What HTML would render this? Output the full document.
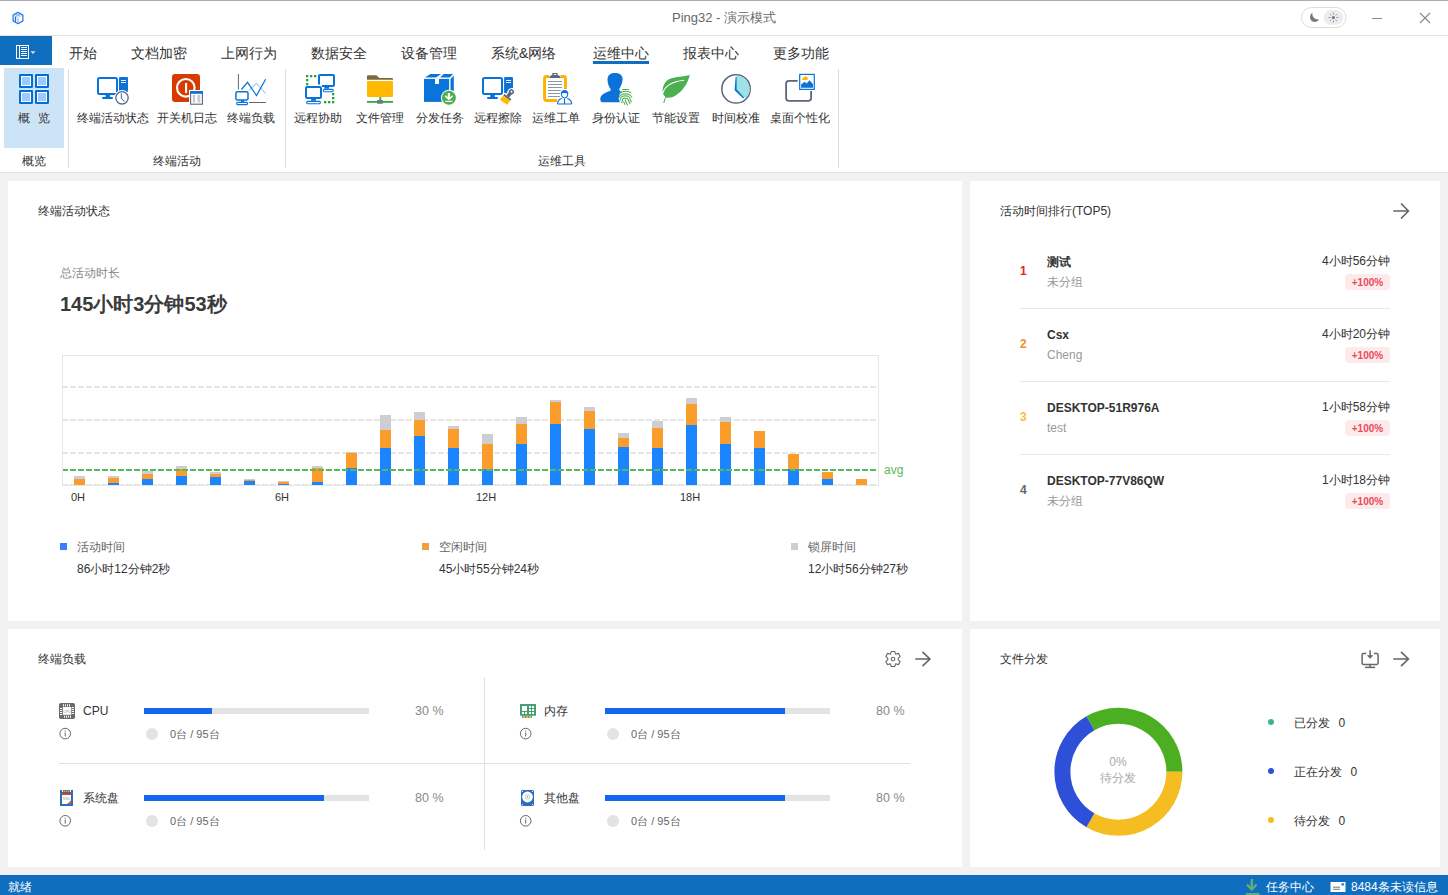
<!DOCTYPE html>
<html><head><meta charset="utf-8">
<style>
html,body{margin:0;padding:0;}
body{width:1448px;height:895px;overflow:hidden;position:relative;background:#f2f2f2;font-family:"Liberation Sans",sans-serif;color:#333;}
.a{position:absolute;white-space:nowrap;}
#title{left:0;top:0;width:1448px;height:35px;background:#fff;border-top:1px solid #adadad;box-sizing:border-box;}
#tline{left:0;top:35px;width:1448px;height:1px;background:#e3e3e3;}
#menu{left:0;top:36px;width:1448px;height:137px;background:#fff;}
#rline{left:0;top:172px;width:1448px;height:1px;background:#e0e0e0;}
.card{position:absolute;background:#fff;}
.tab{position:absolute;top:43px;font-size:14px;line-height:20px;color:#333;}
.rl{position:absolute;top:110px;font-size:12px;line-height:16px;color:#333;}
.gl{position:absolute;top:153px;font-size:12px;line-height:16px;color:#333;}
.sep{position:absolute;top:69px;width:1px;height:99px;background:#dcdcdc;}
.ct{font-size:12px;line-height:16px;color:#333;}
.badge{width:45px;height:16px;border-radius:4px;background:#fdeaea;color:#ea4b5b;font-size:10px;line-height:17px;text-align:center;font-weight:bold;}
</style></head><body>
<div class="a" id="title"></div>
<div class="a" id="tline"></div>
<div class="a" id="menu"></div>
<div class="a" id="rline"></div>
<!-- title -->
<div class="a" style="left:0;top:9px;width:1448px;text-align:center;font-size:13px;line-height:17px;color:#666;">Ping32 - 演示模式</div>
<!-- file btn -->
<div class="a" style="left:0;top:36px;width:52px;height:29px;background:#106ebe;"></div>
<!-- overview highlight -->
<div class="a" style="left:4px;top:68px;width:60px;height:80px;background:#cde4f7;"></div>
<div class="sep" style="left:68px"></div>
<div class="sep" style="left:285px"></div>
<div class="sep" style="left:838px"></div>
<!-- tabs -->
<div class="tab" style="left:69px">开始</div>
<div class="tab" style="left:131px">文档加密</div>
<div class="tab" style="left:221px">上网行为</div>
<div class="tab" style="left:311px">数据安全</div>
<div class="tab" style="left:401px">设备管理</div>
<div class="tab" style="left:491px">系统&amp;网络</div>
<div class="tab" style="left:593px">运维中心</div>
<div class="a" style="left:593px;top:61px;width:56px;height:3px;background:#106ebe;"></div>
<div class="tab" style="left:683px">报表中心</div>
<div class="tab" style="left:773px">更多功能</div>
<!-- ribbon labels -->
<div class="rl" style="left:18px;letter-spacing:8px">概览</div>
<div class="rl" style="left:77px">终端活动状态</div>
<div class="rl" style="left:157px">开关机日志</div>
<div class="rl" style="left:227px">终端负载</div>
<div class="rl" style="left:294px">远程协助</div>
<div class="rl" style="left:356px">文件管理</div>
<div class="rl" style="left:416px">分发任务</div>
<div class="rl" style="left:474px">远程擦除</div>
<div class="rl" style="left:532px">运维工单</div>
<div class="rl" style="left:592px">身份认证</div>
<div class="rl" style="left:652px">节能设置</div>
<div class="rl" style="left:712px">时间校准</div>
<div class="rl" style="left:770px">桌面个性化</div>
<div class="gl" style="left:22px">概览</div>
<div class="gl" style="left:153px">终端活动</div>
<div class="gl" style="left:538px">运维工具</div>
<!-- cards -->
<div class="card" style="left:8px;top:181px;width:954px;height:440px"></div>
<div class="card" style="left:970px;top:181px;width:470px;height:440px"></div>
<div class="card" style="left:8px;top:629px;width:954px;height:238px"></div>
<div class="card" style="left:970px;top:629px;width:470px;height:238px"></div>
<!-- status bar -->
<div class="a" style="left:0;top:875px;width:1448px;height:20px;background:#106ebe;"></div>
<div class="a" style="left:8px;top:879px;font-size:12px;line-height:16px;color:#fff;">就绪</div>
<div class="a" style="left:1266px;top:879px;font-size:12px;line-height:16px;color:#fff;">任务中心</div>
<div class="a" style="left:1351px;top:879px;font-size:12px;line-height:16px;color:#fff;">8484条未读信息</div>
<!-- card1 -->
<div class="a ct" style="left:38px;top:203px;">终端活动状态</div>
<div class="a" style="left:60px;top:265px;font-size:12px;line-height:16px;color:#888;">总活动时长</div>
<div class="a" style="left:60px;top:291px;font-size:20px;line-height:26px;font-weight:bold;color:#3a3a3a;">145小时3分钟53秒</div>
<div class="a" style="left:67px;top:490px;width:22px;text-align:center;font-size:11px;line-height:14px;color:#333;">0H</div>
<div class="a" style="left:271px;top:490px;width:22px;text-align:center;font-size:11px;line-height:14px;color:#333;">6H</div>
<div class="a" style="left:473px;top:490px;width:26px;text-align:center;font-size:11px;line-height:14px;color:#333;">12H</div>
<div class="a" style="left:677px;top:490px;width:26px;text-align:center;font-size:11px;line-height:14px;color:#333;">18H</div>
<div class="a" style="left:884px;top:462px;font-size:12px;line-height:16px;color:#5cb85c;">avg</div>
<div class="a" style="left:60px;top:543px;width:7px;height:7px;background:#3d7eff;"></div>
<div class="a" style="left:422px;top:543px;width:7px;height:7px;background:#f0a040;"></div>
<div class="a" style="left:791px;top:543px;width:7px;height:7px;background:#cdcdd2;"></div>
<div class="a" style="left:77px;top:539px;font-size:12px;line-height:16px;color:#666;">活动时间</div>
<div class="a" style="left:439px;top:539px;font-size:12px;line-height:16px;color:#666;">空闲时间</div>
<div class="a" style="left:808px;top:539px;font-size:12px;line-height:16px;color:#666;">锁屏时间</div>
<div class="a" style="left:77px;top:561px;font-size:12px;line-height:16px;color:#333;">86小时12分钟2秒</div>
<div class="a" style="left:439px;top:561px;font-size:12px;line-height:16px;color:#333;">45小时55分钟24秒</div>
<div class="a" style="left:808px;top:561px;font-size:12px;line-height:16px;color:#333;">12小时56分钟27秒</div>
<!-- card2 -->
<div class="a ct" style="left:1000px;top:203px;">活动时间排行(TOP5)</div>
<div class="a" style="left:1020px;top:263px;font-size:12px;line-height:16px;font-weight:bold;color:#e8251f;">1</div>
<div class="a" style="left:1020px;top:336px;font-size:12px;line-height:16px;font-weight:bold;color:#f0902a;">2</div>
<div class="a" style="left:1020px;top:409px;font-size:12px;line-height:16px;font-weight:bold;color:#f5c033;">3</div>
<div class="a" style="left:1020px;top:482px;font-size:12px;line-height:16px;font-weight:bold;color:#666;">4</div>
<div class="a" style="left:1047px;top:254px;font-size:12px;line-height:16px;font-weight:bold;color:#333;">测试</div>
<div class="a" style="left:1047px;top:327px;font-size:12px;line-height:16px;font-weight:bold;color:#333;">Csx</div>
<div class="a" style="left:1047px;top:400px;font-size:12px;line-height:16px;font-weight:bold;color:#333;">DESKTOP-51R976A</div>
<div class="a" style="left:1047px;top:473px;font-size:12px;line-height:16px;font-weight:bold;color:#333;">DESKTOP-77V86QW</div>
<div class="a" style="left:1047px;top:274px;font-size:12px;line-height:16px;color:#999;">未分组</div>
<div class="a" style="left:1047px;top:347px;font-size:12px;line-height:16px;color:#999;">Cheng</div>
<div class="a" style="left:1047px;top:420px;font-size:12px;line-height:16px;color:#999;">test</div>
<div class="a" style="left:1047px;top:493px;font-size:12px;line-height:16px;color:#999;">未分组</div>
<div class="a" style="right:58px;top:253px;font-size:12px;line-height:16px;color:#333;">4小时56分钟</div>
<div class="a" style="right:58px;top:326px;font-size:12px;line-height:16px;color:#333;">4小时20分钟</div>
<div class="a" style="right:58px;top:399px;font-size:12px;line-height:16px;color:#333;">1小时58分钟</div>
<div class="a" style="right:58px;top:472px;font-size:12px;line-height:16px;color:#333;">1小时18分钟</div>
<div class="a badge" style="left:1345px;top:274px;">+100%</div>
<div class="a badge" style="left:1345px;top:347px;">+100%</div>
<div class="a badge" style="left:1345px;top:420px;">+100%</div>
<div class="a badge" style="left:1345px;top:493px;">+100%</div>
<div class="a" style="left:1020px;top:308px;width:370px;height:1px;background:#e8e8e8;"></div>
<div class="a" style="left:1020px;top:381px;width:370px;height:1px;background:#e8e8e8;"></div>
<div class="a" style="left:1020px;top:454px;width:370px;height:1px;background:#e8e8e8;"></div>
<!-- card3 -->
<div class="a ct" style="left:38px;top:651px;">终端负载</div>
<div class="a" style="left:484px;top:677px;width:1px;height:173px;background:#e0e0e0;"></div>
<div class="a" style="left:59px;top:763px;width:851px;height:1px;background:#e0e0e0;"></div>
<div class="a" style="left:83px;top:703px;font-size:12px;line-height:16px;color:#333;">CPU</div>
<div class="a" style="left:144px;top:708px;width:225px;height:6px;background:#e3e3e3;"><div style="width:68px;height:6px;background:#1466f0;"></div></div>
<div class="a" style="left:415px;top:703px;font-size:12.5px;line-height:16px;color:#888;">30 %</div>
<div class="a" style="left:146px;top:728px;width:12px;height:12px;border-radius:6px;background:#e3e3e3;"></div>
<div class="a" style="left:170px;top:727px;font-size:11px;line-height:14px;color:#666;">0台 / 95台</div>
<div class="a" style="left:544px;top:703px;font-size:12px;line-height:16px;color:#333;">内存</div>
<div class="a" style="left:605px;top:708px;width:225px;height:6px;background:#e3e3e3;"><div style="width:180px;height:6px;background:#1466f0;"></div></div>
<div class="a" style="left:876px;top:703px;font-size:12.5px;line-height:16px;color:#888;">80 %</div>
<div class="a" style="left:607px;top:728px;width:12px;height:12px;border-radius:6px;background:#e3e3e3;"></div>
<div class="a" style="left:631px;top:727px;font-size:11px;line-height:14px;color:#666;">0台 / 95台</div>
<div class="a" style="left:83px;top:790px;font-size:12px;line-height:16px;color:#333;">系统盘</div>
<div class="a" style="left:144px;top:795px;width:225px;height:6px;background:#e3e3e3;"><div style="width:180px;height:6px;background:#1466f0;"></div></div>
<div class="a" style="left:415px;top:790px;font-size:12.5px;line-height:16px;color:#888;">80 %</div>
<div class="a" style="left:146px;top:815px;width:12px;height:12px;border-radius:6px;background:#e3e3e3;"></div>
<div class="a" style="left:170px;top:814px;font-size:11px;line-height:14px;color:#666;">0台 / 95台</div>
<div class="a" style="left:544px;top:790px;font-size:12px;line-height:16px;color:#333;">其他盘</div>
<div class="a" style="left:605px;top:795px;width:225px;height:6px;background:#e3e3e3;"><div style="width:180px;height:6px;background:#1466f0;"></div></div>
<div class="a" style="left:876px;top:790px;font-size:12.5px;line-height:16px;color:#888;">80 %</div>
<div class="a" style="left:607px;top:815px;width:12px;height:12px;border-radius:6px;background:#e3e3e3;"></div>
<div class="a" style="left:631px;top:814px;font-size:11px;line-height:14px;color:#666;">0台 / 95台</div>
<!-- card4 -->
<div class="a ct" style="left:1000px;top:651px;">文件分发</div>
<div class="a" style="left:1088px;top:754px;width:60px;text-align:center;font-size:12px;line-height:16px;color:#aaa;">0%<br>待分发</div>
<div class="a" style="left:1268px;top:718.8px;width:6.4px;height:6.4px;border-radius:4px;background:#3cb68c;"></div>
<div class="a" style="left:1268px;top:767.7px;width:6.4px;height:6.4px;border-radius:4px;background:#2e4fd8;"></div>
<div class="a" style="left:1268px;top:817px;width:6.4px;height:6.4px;border-radius:4px;background:#f5bd22;"></div>
<div class="a" style="left:1294px;top:715px;font-size:12px;line-height:16px;color:#333;">已分发<span style="margin-left:8.5px">0</span></div>
<div class="a" style="left:1294px;top:764px;font-size:12px;line-height:16px;color:#333;">正在分发<span style="margin-left:8.5px">0</span></div>
<div class="a" style="left:1294px;top:813px;font-size:12px;line-height:16px;color:#333;">待分发<span style="margin-left:8.5px">0</span></div>
<svg class="a" style="left:0;top:0" width="1448" height="895" viewBox="0 0 1448 895">
<!-- chart frame -->
<rect x="62.5" y="355.5" width="816" height="130" fill="none" stroke="#e6e6e6" stroke-width="1"/>
<g stroke="#e6e6e6" stroke-width="2" stroke-dasharray="6 2">
<line x1="62" y1="387" x2="878" y2="387"/>
<line x1="62" y1="420" x2="878" y2="420"/>
<line x1="62" y1="453" x2="878" y2="453"/>
<line x1="62" y1="485" x2="878" y2="485"/>
</g>
<rect x="74" y="479" width="11" height="6" fill="#fa9d2b"/>
<rect x="74" y="476" width="11" height="3" fill="#cdcdd2"/>
<rect x="108" y="483" width="11" height="2" fill="#1a85ff"/>
<rect x="108" y="478" width="11" height="5" fill="#fa9d2b"/>
<rect x="108" y="476" width="11" height="2" fill="#cdcdd2"/>
<rect x="142" y="479" width="11" height="6" fill="#1a85ff"/>
<rect x="142" y="474" width="11" height="5" fill="#fa9d2b"/>
<rect x="142" y="471" width="11" height="3" fill="#cdcdd2"/>
<rect x="176" y="476" width="11" height="9" fill="#1a85ff"/>
<rect x="176" y="469" width="11" height="7" fill="#fa9d2b"/>
<rect x="176" y="466" width="11" height="3" fill="#cdcdd2"/>
<rect x="210" y="477" width="11" height="8" fill="#1a85ff"/>
<rect x="210" y="474" width="11" height="3" fill="#fa9d2b"/>
<rect x="210" y="472" width="11" height="2" fill="#cdcdd2"/>
<rect x="244" y="481" width="11" height="4" fill="#1a85ff"/>
<rect x="244" y="480" width="11" height="1" fill="#fa9d2b"/>
<rect x="244" y="479" width="11" height="1" fill="#cdcdd2"/>
<rect x="278" y="484" width="11" height="1" fill="#1a85ff"/>
<rect x="278" y="482" width="11" height="2" fill="#fa9d2b"/>
<rect x="278" y="481" width="11" height="1" fill="#cdcdd2"/>
<rect x="312" y="482" width="11" height="3" fill="#1a85ff"/>
<rect x="312" y="468" width="11" height="14" fill="#fa9d2b"/>
<rect x="312" y="466" width="11" height="2" fill="#cdcdd2"/>
<rect x="346" y="468" width="11" height="17" fill="#1a85ff"/>
<rect x="346" y="453" width="11" height="15" fill="#fa9d2b"/>
<rect x="346" y="452" width="11" height="1" fill="#cdcdd2"/>
<rect x="380" y="448" width="11" height="37" fill="#1a85ff"/>
<rect x="380" y="430" width="11" height="18" fill="#fa9d2b"/>
<rect x="380" y="415" width="11" height="15" fill="#cdcdd2"/>
<rect x="414" y="436" width="11" height="49" fill="#1a85ff"/>
<rect x="414" y="420" width="11" height="16" fill="#fa9d2b"/>
<rect x="414" y="412" width="11" height="8" fill="#cdcdd2"/>
<rect x="448" y="448" width="11" height="37" fill="#1a85ff"/>
<rect x="448" y="429" width="11" height="19" fill="#fa9d2b"/>
<rect x="448" y="426" width="11" height="3" fill="#cdcdd2"/>
<rect x="482" y="469" width="11" height="16" fill="#1a85ff"/>
<rect x="482" y="444" width="11" height="25" fill="#fa9d2b"/>
<rect x="482" y="434" width="11" height="10" fill="#cdcdd2"/>
<rect x="516" y="444" width="11" height="41" fill="#1a85ff"/>
<rect x="516" y="424" width="11" height="20" fill="#fa9d2b"/>
<rect x="516" y="417" width="11" height="7" fill="#cdcdd2"/>
<rect x="550" y="424" width="11" height="61" fill="#1a85ff"/>
<rect x="550" y="402" width="11" height="22" fill="#fa9d2b"/>
<rect x="550" y="400" width="11" height="2" fill="#cdcdd2"/>
<rect x="584" y="429" width="11" height="56" fill="#1a85ff"/>
<rect x="584" y="411" width="11" height="18" fill="#fa9d2b"/>
<rect x="584" y="407" width="11" height="4" fill="#cdcdd2"/>
<rect x="618" y="447" width="11" height="38" fill="#1a85ff"/>
<rect x="618" y="438" width="11" height="9" fill="#fa9d2b"/>
<rect x="618" y="433" width="11" height="5" fill="#cdcdd2"/>
<rect x="652" y="448" width="11" height="37" fill="#1a85ff"/>
<rect x="652" y="428" width="11" height="20" fill="#fa9d2b"/>
<rect x="652" y="421" width="11" height="7" fill="#cdcdd2"/>
<rect x="686" y="425" width="11" height="60" fill="#1a85ff"/>
<rect x="686" y="404" width="11" height="21" fill="#fa9d2b"/>
<rect x="686" y="398" width="11" height="6" fill="#cdcdd2"/>
<rect x="720" y="444" width="11" height="41" fill="#1a85ff"/>
<rect x="720" y="422" width="11" height="22" fill="#fa9d2b"/>
<rect x="720" y="417" width="11" height="5" fill="#cdcdd2"/>
<rect x="754" y="448" width="11" height="37" fill="#1a85ff"/>
<rect x="754" y="431" width="11" height="17" fill="#fa9d2b"/>
<rect x="788" y="469" width="11" height="16" fill="#1a85ff"/>
<rect x="788" y="454" width="11" height="15" fill="#fa9d2b"/>
<rect x="822" y="479" width="11" height="6" fill="#1a85ff"/>
<rect x="822" y="472" width="11" height="7" fill="#fa9d2b"/>
<rect x="856" y="479" width="11" height="6" fill="#fa9d2b"/>
<line x1="63" y1="470" x2="878" y2="470" stroke="#56b95a" stroke-width="2" stroke-dasharray="6 2" stroke-dashoffset="1"/>
<!-- donut -->
<g fill="none" stroke-width="16">
<path d="M1090.4 723.2 A56 56 0 0 1 1174.4 771.7" stroke="#4caf22"/>
<path d="M1174.4 771.7 A56 56 0 0 1 1090.4 820.2" stroke="#f5bd22"/>
<path d="M1090.4 820.2 A56 56 0 0 1 1090.4 723.2" stroke="#2e4fd8"/>
</g>
</svg>
<svg class="a" style="left:0;top:0" width="1448" height="895" viewBox="0 0 1448 895">
<!-- logo -->
<path d="M13.1 15.1 L18 12.3 L22.9 15.1 L18 17.9 Z" fill="#cfe5fc"/>
<path d="M15.5 13.7 L20.4 16.5 M15.6 16.5 L20.5 13.7" stroke="#7db6f2" stroke-width="0.9" fill="none"/>
<path d="M15.5 16.6 V21.8" stroke="#1f6fd8" stroke-width="1.3"/>
<path d="M18 17.9 V23.6" stroke="#74b0f0" stroke-width="1.1"/>
<path d="M18 12.3 L22.9 15.1 V20.9 L18 23.7 L13.1 20.9 V15.1 Z" fill="none" stroke="#2a7de1" stroke-width="1.3" stroke-linejoin="round"/>
<!-- file menu icon -->
<g fill="none" stroke="#fff" stroke-width="1">
<rect x="16.5" y="45.5" width="12" height="13"/>
<line x1="19.5" y1="46" x2="19.5" y2="58"/>
<path d="M21 47.5H27M21 49.5H27M21 51.5H27M21 53.5H27M21 55.5H27"/>
</g>
<path d="M30.5 51.2 L35.5 51.2 L33 54 Z" fill="#cfe3f6"/>
<!-- overview grid -->
<g>
<rect x="19" y="74" width="14" height="14" rx="1.2" fill="#006fd6"/><rect x="21" y="76" width="10" height="10" fill="#fff"/><rect x="22" y="77" width="8" height="8" fill="#9ccbff"/>
<rect x="35" y="74" width="14" height="14" rx="1.2" fill="#006fd6"/><rect x="37" y="76" width="10" height="10" fill="#fff"/><rect x="38" y="77" width="8" height="8" fill="#9ccbff"/>
<rect x="19" y="90" width="14" height="14" rx="1.2" fill="#006fd6"/><rect x="21" y="92" width="10" height="10" fill="#fff"/><rect x="22" y="93" width="8" height="8" fill="#9ccbff"/>
<rect x="35" y="90" width="14" height="14" rx="1.2" fill="#006fd6"/><rect x="37" y="92" width="10" height="10" fill="#fff"/><rect x="38" y="93" width="8" height="8" fill="#9ccbff"/>
</g>
<!-- terminal activity status -->
<g>
<rect x="98" y="78" width="19" height="16" rx="1.5" fill="none" stroke="#0a72d8" stroke-width="2"/>
<rect x="105.5" y="94.5" width="4.5" height="3" fill="#0a72d8"/>
<rect x="102" y="97" width="11" height="2" rx="1" fill="#0a72d8"/>
<rect x="119" y="77" width="9" height="15" rx="1" fill="#0a72d8"/>
<path d="M121 80.5H126M121 82.5H126" stroke="#fff" stroke-width="0.9"/>
<circle cx="122" cy="97.8" r="7.8" fill="#fff"/>
<circle cx="122" cy="97.8" r="6.2" fill="#fff" stroke="#5c667a" stroke-width="1.3"/>
<path d="M121.3 93.3 L121.3 98.6 L124.6 101.3" fill="none" stroke="#0a72d8" stroke-width="1"/>
</g>
<!-- power log -->
<g>
<rect x="172" y="74" width="28" height="28" rx="3" fill="#d83b01"/>
<circle cx="185.8" cy="87.8" r="8.8" fill="none" stroke="#fff" stroke-width="2.1"/>
<rect x="185" y="83" width="2.1" height="10" fill="#fff"/>
<rect x="189" y="90" width="15" height="15.5" fill="#fff"/>
<rect x="190.6" y="91.6" width="11.8" height="12.6" fill="#fff" stroke="#5c667a" stroke-width="1.1"/>
<rect x="190" y="91" width="13" height="2.8" fill="#0a72d8"/>
<rect x="192.8" y="95" width="2.4" height="7.5" fill="#c3c7d3"/>
<rect x="197.3" y="95" width="3" height="7.5" fill="#c9ccd6"/>
</g>
<!-- terminal load -->
<g fill="none">
<line x1="238.4" y1="74" x2="238.4" y2="89.5" stroke="#5c667a" stroke-width="1"/>
<line x1="249" y1="102.5" x2="266" y2="102.5" stroke="#5c667a" stroke-width="1"/>
<polyline points="249,90.3 256.5,83.5 265.8,93.7" stroke="#9fcbf2" stroke-width="1.1"/>
<polyline points="241.4,89.5 247.5,82.3 256.5,95.5 265.6,79.2" stroke="#0a72d8" stroke-width="1.2"/>
<rect x="235.9" y="91.8" width="12.1" height="8.3" rx="1.5" stroke="#0a72d8" stroke-width="1.5"/>
<rect x="241" y="100.5" width="3" height="1.5" fill="#0a72d8"/>
<rect x="236.6" y="102.3" width="11" height="2.4" rx="1.2" stroke="#0a72d8" stroke-width="1.2"/>
</g>
<!-- remote assist -->
<g>
<g fill="#2aa03a">
<rect x="306" y="75" width="2.3" height="2.3"/><rect x="310" y="75" width="2.3" height="2.3"/><rect x="314" y="75" width="2.3" height="2.3"/>
<rect x="306" y="79" width="2.3" height="2.3"/><rect x="306" y="83" width="2.3" height="2.3"/>
<rect x="332" y="93" width="2.3" height="2.3"/><rect x="332" y="97" width="2.3" height="2.3"/><rect x="332" y="101" width="2.3" height="2.3"/>
<rect x="324" y="101" width="2.3" height="2.3"/><rect x="328" y="101" width="2.3" height="2.3"/>
</g>
<path d="M319 84.5 V76 Q319 75 320 75 H333 Q334 75 334 76 V85 Q334 86 333 86 H322" fill="none" stroke="#0a72d8" stroke-width="2"/>
<rect x="324.4" y="86.5" width="4.6" height="2.2" fill="#0a72d8"/>
<rect x="323.3" y="89.4" width="10" height="2.3" rx="1.1" fill="none" stroke="#0a72d8" stroke-width="1.1"/>
<rect x="306" y="87" width="15" height="11" rx="1.2" fill="#fff" stroke="#0a72d8" stroke-width="2"/>
<rect x="311.1" y="98.6" width="4.8" height="2.2" fill="#0a72d8"/>
<rect x="306.6" y="101.4" width="13.8" height="2.3" rx="1.1" fill="none" stroke="#0a72d8" stroke-width="1.1"/>
</g>
<!-- file manage -->
<g>
<path d="M367 79.8 V76.2 Q367 75.2 368 75.2 H376.4 L379.3 78 H392.3 Q393 78.3 393 79 V79.8 Z" fill="#7b6b3c"/>
<rect x="367" y="81" width="26" height="16" rx="1" fill="#ffb900"/>
<rect x="379.4" y="97" width="1.8" height="3.5" fill="#32aa3c"/>
<rect x="367" y="101" width="26" height="1.8" fill="#32aa3c"/>
<rect x="377.1" y="100.1" width="5.8" height="3.6" rx="0.5" fill="#6b7890"/>
</g>
<!-- distribute task -->
<g>
<rect x="424" y="78.9" width="25.1" height="23" fill="#0a74da"/>
<path d="M425.1 77.6 L430.4 74 H441.2 L435.9 77.6 Z M440.2 77.6 L443.6 74 H453.1 L449.7 77.6 Z" fill="#0a74da"/>
<path d="M450.5 78.9 L453.8 75.5 V90.8 L450.5 91.5 Z" fill="#0a74da"/>
<rect x="435" y="78.5" width="4" height="5.5" fill="#fff"/>
<circle cx="448.9" cy="97.8" r="8" fill="#fff"/>
<circle cx="448.9" cy="97.8" r="7" fill="#4caf50"/>
<path d="M447.8 93 H450 V97.2 L452 95.3 L453 96.5 L448.9 100.3 L444.8 96.5 L445.8 95.3 L447.8 97.2 Z" fill="#fff"/>
<rect x="445.4" y="100.8" width="7" height="1.2" fill="#fff"/>
</g>
<!-- remote erase -->
<g>
<rect x="483" y="78" width="19" height="16" rx="1.5" fill="none" stroke="#0a72d8" stroke-width="2"/>
<rect x="490.3" y="94.5" width="4.5" height="3" fill="#0a72d8"/>
<rect x="487" y="97" width="11" height="2" rx="1" fill="#0a72d8"/>
<path d="M505.1 77 H512 Q513 77 513 78 V88 L509 90 L506 94 L504.1 93 V78 Q504.1 77 505.1 77 Z" fill="#0a72d8"/>
<path d="M506 80.5H511M506 82.5H511" stroke="#fff" stroke-width="0.9"/>
<g transform="translate(511.4 91.8) rotate(37)">
<g fill="#fff" stroke="#fff" stroke-width="2.2" stroke-linejoin="round">
<circle cx="0" cy="0" r="2.6"/><rect x="-1.7" y="0" width="3.4" height="6"/><rect x="-4.4" y="6" width="8.8" height="7.4"/>
</g>
<circle cx="0" cy="0" r="2.6" fill="#5c667a"/>
<rect x="-1.7" y="0" width="3.4" height="6.2" fill="#5c667a"/>
<rect x="-4.4" y="6" width="8.8" height="1.8" fill="#5c667a"/>
<circle cx="0" cy="-0.2" r="1" fill="#fff"/>
<path d="M-4.4 7.8 H4.4 V13 Q0 13.8 -4.4 13 Z" fill="#ffb900"/>
</g>
<!-- work order -->
<g>
<path d="M549.5 76.45 H546.5 Q544.55 76.45 544.55 78.4 V98.6 Q544.55 100.55 546.5 100.55 H557" fill="none" stroke="#ffb300" stroke-width="2.9"/>
<path d="M560.5 76.45 H563.5 Q565.45 76.45 565.45 78.4 V89" fill="none" stroke="#ffb300" stroke-width="2.9"/>
<path d="M552.3 73 H557.5 V75.3 H559 L561 77.9 H549 L551 75.3 H552.3 Z" fill="#5c667a"/>
<rect x="553.8" y="73.9" width="2.4" height="1" fill="#fff"/>
<path d="M548 81.5H562M548 84.5H562M548 87.5H562M548 90.5H560.5M548 93.5H560M548 96.5H560" stroke="#8b95a8" stroke-width="1"/>
<path d="M557.5 104 Q557.5 99.5 561.8 98.5 M571.6 104 Q571.6 99.5 567.2 98.5 M557.5 104 H571.6 M564.5 98.6 V104" fill="#fff" stroke="#0a72d8" stroke-width="1.1"/>
<path d="M561.3 92.5 Q561.3 97.8 564.5 98 Q567.8 97.8 567.8 92.5" fill="#fff" stroke="#0a72d8" stroke-width="1.1"/>
<path d="M561 93.4 Q561 89.9 564.5 89.9 Q568.2 89.9 568.2 93.4 Q564.5 92.6 561 93.4 Z" fill="#0a72d8"/>
</g>
<!-- identity auth -->
<g>
<path d="M615 73 C620 73 622.8 75.7 622.6 79.5 C622.4 83.5 620.5 87 619.2 89 L619.8 91 C622 91.6 622.5 92 622.5 92 L620.8 102.3 H602.5 Q600.2 102 600.3 99 C600.5 95 604 93 610.5 90.8 L610.6 89 C609 87 607.5 83.5 607.5 79.5 C607.5 75.7 610 73 615 73 Z" fill="#0a72d8"/>
<circle cx="626.6" cy="98.2" r="7.9" fill="#fff"/>
<g fill="none" stroke="#4caf50" stroke-width="1.05" stroke-linecap="round">
<path d="M622.8 89.4 H628.6"/>
<path d="M619.8 92.9 Q625.3 89.8 630.8 92.6"/>
<path d="M619.2 97.2 Q620.6 93.9 625.3 93.7 Q630.2 93.9 631.8 97.2"/>
<path d="M620 100.2 Q620.8 95.9 625.3 95.8 Q629.8 95.9 630.4 100 L631.3 102"/>
<path d="M621.9 102.7 Q621.8 97.9 625.3 97.9 Q628.3 98 628.6 100.8 L629.9 103.8"/>
<path d="M625.3 99.8 Q625.8 102.6 627.6 104.8"/>
<path d="M623.7 101.8 L624.8 104.4"/>
</g>
</g>
<!-- energy leaf -->
<g>
<path d="M663.2 102.7 L665.3 96.8 C661.2 94 661.8 85.5 667 80.6 C672 76.5 681 77.3 689.8 75 C687.8 83 683.5 90.5 676 95.2 C672.3 97.6 668.6 98 665.9 97.4 L664.3 102.9 Z" fill="#4caf50"/>
<path d="M662.8 93.3 C664.6 86.8 670.5 81.6 684.2 80.2" fill="none" stroke="#fff" stroke-width="1.1"/>
</g>
<!-- time sync -->
<g>
<circle cx="736" cy="88.9" r="14.2" fill="#fff" stroke="#5c667a" stroke-width="1.5"/>
<path d="M736 75.4 A13.5 13.5 0 0 1 745.6 98.5 L735.6 89.6 Z" fill="#9ee2e6"/>
<path d="M735.6 77 L736.6 77.2 L736.6 89.2 L744.2 97.6 L743.2 98.4 L734.6 90.2 Z" fill="#0a72d8"/>
</g>
<!-- desktop personalize -->
<g>
<path d="M797.7 80.8 H789 Q786.1 80.8 786.1 83.7 V98 Q786.1 100.9 789 100.9 H808.2 Q811.1 100.9 811.1 98 V90.9" fill="none" stroke="#5c667a" stroke-width="1.8"/>
<rect x="799.7" y="74.4" width="14.6" height="15" fill="#fff" stroke="#0a72d8" stroke-width="1.2"/>
<path d="M802 79.5 Q802 77.6 803.8 77.5 Q804.5 76 806 76.4 Q808 76.7 807.9 78.5 Q808 79.9 807 79.9 H802.8 Q802 79.9 802 79.5 Z" fill="#ffb900"/>
<path d="M801.1 87.7 V84.5 L804.6 81.7 L806.6 83.6 L809.5 80.3 L813 84 V87.7 Z" fill="#0a72d8"/>
</g>
<!-- theme toggle -->
<rect x="1301.5" y="7.5" width="44.5" height="20" rx="10" fill="#fff" stroke="#dcdcdc" stroke-width="1"/>
<rect x="1323.7" y="10.1" width="19.5" height="14.7" rx="7.3" fill="#ececec"/>
<path d="M1312.6 12.8 C1309 14 1308.9 21.8 1314.5 22 C1316.6 22 1318.2 21 1319 19.3 C1314.8 20 1311.5 16.5 1312.6 12.8 Z" fill="#777"/>
<g stroke="#7a8194" stroke-width="0.8" stroke-linecap="round">
<line x1="1333.4" y1="13" x2="1333.4" y2="14.2"/><line x1="1333.4" y1="20.8" x2="1333.4" y2="22"/>
<line x1="1328.9" y1="17.5" x2="1330.1" y2="17.5"/><line x1="1336.7" y1="17.5" x2="1337.9" y2="17.5"/>
<line x1="1330.2" y1="14.3" x2="1331" y2="15.1"/><line x1="1335.8" y1="19.9" x2="1336.6" y2="20.7"/>
<line x1="1336.6" y1="14.3" x2="1335.8" y2="15.1"/><line x1="1331" y1="19.9" x2="1330.2" y2="20.7"/>
</g>
<circle cx="1333.4" cy="17.5" r="1.6" fill="#6b7590"/>
<!-- min / close -->
<line x1="1372" y1="18.5" x2="1382" y2="18.5" stroke="#888" stroke-width="1"/>
<path d="M1420 13 L1430 23 M1430 13 L1420 23" stroke="#888" stroke-width="1.1"/>
<!-- top5 arrow -->
<g fill="none" stroke="#666" stroke-width="1.7" stroke-linecap="round" stroke-linejoin="round">
<path d="M1394 211 H1408.5 M1401.5 204 L1408.5 211 L1401.5 218"/>
<path d="M916 659 H930 M923 652.3 L930 659 L923 665.7"/>
<path d="M1394 659 H1408.5 M1401.5 652.3 L1408.5 659 L1401.5 665.7"/>
</g>
<!-- gear -->
<path d="M891.3 651.5 H894.7 L895.6 654.2 L898.4 653.4 L900.1 656.3 L898.2 658.3 L898.2 659.7 L900.1 661.7 L898.4 664.6 L895.6 663.8 L894.7 666.5 H891.3 L890.4 663.8 L887.6 664.6 L885.9 661.7 L887.8 659.7 L887.8 658.3 L885.9 656.3 L887.6 653.4 L890.4 654.2 Z" fill="none" stroke="#666" stroke-width="1.1" stroke-linejoin="round"/>
<circle cx="893" cy="659" r="1.8" fill="none" stroke="#666" stroke-width="1.1"/>
<!-- download icon -->
<g fill="none" stroke="#666" stroke-width="1.5">
<path d="M1366.2 653.6 H1363.5 Q1362.1 653.6 1362.1 655 V663 Q1362.1 664.4 1363.5 664.4 H1376.7 Q1378.1 664.4 1378.1 663 V655 Q1378.1 653.6 1376.7 653.6 H1374"/>
<line x1="1370.1" y1="650.2" x2="1370.1" y2="656"/>
<line x1="1365.1" y1="667.4" x2="1375.1" y2="667.4"/>
<line x1="1370.1" y1="664.5" x2="1370.1" y2="667"/>
</g>
<path d="M1366.8 655.3 H1373.4 L1370.1 658.7 Z" fill="#666"/>
<!-- info icons -->
<g fill="none" stroke="#666" stroke-width="1">
<circle cx="65.2" cy="733.6" r="5.3"/><circle cx="525.7" cy="733.6" r="5.3"/>
<circle cx="65.2" cy="820.8" r="5.3"/><circle cx="525.7" cy="820.8" r="5.3"/>
</g>
<g fill="#666">
<rect x="64.7" y="730.6" width="1" height="1"/><rect x="64.7" y="732.4" width="1" height="4"/>
<rect x="525.2" y="730.6" width="1" height="1"/><rect x="525.2" y="732.4" width="1" height="4"/>
<rect x="64.7" y="817.8" width="1" height="1"/><rect x="64.7" y="819.6" width="1" height="4"/>
<rect x="525.2" y="817.8" width="1" height="1"/><rect x="525.2" y="819.6" width="1" height="4"/>
</g>
<!-- cpu icon -->
<g>
<rect x="59" y="703" width="16" height="16" rx="1.8" fill="#6b6b6b"/>
<rect x="62.8" y="707" width="8.5" height="7.8" fill="#fff"/>
<text x="67" y="712.6" font-size="3.5" text-anchor="middle" fill="#8a8fa0" font-family="Liberation Sans">CPU</text>
<g fill="#fff">
<rect x="63" y="704.3" width="1" height="2"/><rect x="65" y="704.3" width="1" height="2"/><rect x="67" y="704.3" width="1" height="2"/><rect x="69" y="704.3" width="1" height="2"/>
<rect x="64" y="715.7" width="1" height="2"/><rect x="66" y="715.7" width="1" height="2"/><rect x="68" y="715.7" width="1" height="2"/><rect x="70" y="715.7" width="1" height="2"/>
<rect x="60" y="708" width="2" height="1"/><rect x="60" y="710" width="2" height="1"/><rect x="60" y="712" width="2" height="1"/><rect x="60" y="714" width="2" height="1"/>
<rect x="72" y="707" width="2" height="1"/><rect x="72" y="709" width="2" height="1"/><rect x="72" y="711" width="2" height="1"/><rect x="72" y="713" width="2" height="1"/>
</g>
</g>
<!-- memory icon -->
<g>
<rect x="520" y="704" width="16" height="11.7" fill="#44a074"/>
<rect x="522" y="715.5" width="10" height="2.3" fill="#44a074"/>
<g fill="#fff">
<rect x="522" y="706" width="5" height="5"/>
<rect x="529" y="706" width="2" height="2"/><rect x="532" y="706" width="2" height="2"/>
<rect x="529" y="709" width="2" height="2"/><rect x="532" y="709" width="2" height="2"/>
<rect x="522" y="712" width="2" height="2"/><rect x="525" y="712" width="2" height="2"/><rect x="529" y="712" width="2" height="2"/><rect x="532" y="712" width="2" height="2"/>
</g>
<g fill="#f7ac45"><rect x="523" y="716" width="2" height="2"/><rect x="526" y="716" width="2" height="2"/><rect x="529" y="716" width="2" height="2"/></g>
</g>
<!-- system disk -->
<g>
<path d="M60 790 H62 V792 H71 V790 H73 V806 H60 Z" fill="#2a6fbd"/>
<rect x="63" y="790" width="7" height="2" fill="#777"/>
<circle cx="64.5" cy="791.3" r="0.6" fill="#f5b041"/><circle cx="66.5" cy="791.3" r="0.6" fill="#f5b041"/><circle cx="68.5" cy="791.3" r="0.6" fill="#f5b041"/>
<rect x="62" y="793" width="9" height="11" fill="#fff"/>
<rect x="62" y="793" width="9" height="2" fill="#e0400f"/>
<text x="66.5" y="800" font-size="3.6" text-anchor="middle" fill="#999" font-family="Liberation Sans">SSD</text>
<path d="M71 800.5 V804 H67 Z" fill="#e85a1f"/>
</g>
<!-- other disk -->
<g>
<rect x="521" y="790" width="13" height="16" rx="1.5" fill="#2a6fbd"/>
<circle cx="527.5" cy="797" r="5.4" fill="#fff"/>
<circle cx="527.5" cy="797" r="2.2" fill="none" stroke="#bbb" stroke-width="0.8"/>
<rect x="527.2" y="796" width="0.7" height="1.6" fill="#777"/>
<g fill="#fff"><circle cx="522.5" cy="791.5" r="0.6"/><circle cx="532.5" cy="791.5" r="0.6"/><circle cx="522.5" cy="804.5" r="0.6"/><circle cx="532.5" cy="804.5" r="0.6"/></g>
</g>
<!-- status bar icons -->
<g>
<path d="M1251.8 879 V889.5 M1247 884.5 L1251.8 889.5 L1256.6 884.5" fill="none" stroke="#5fae7a" stroke-width="2.4"/>
<rect x="1246" y="893" width="13.5" height="2" fill="#5fae7a"/>
<rect x="1330.5" y="882" width="15" height="10" fill="#fff"/>
<path d="M1333 887.2 H1340 M1333 889.3 H1340" stroke="#666" stroke-width="0.9"/>
<rect x="1341.5" y="883.2" width="2.3" height="2.3" fill="#1a6fd0"/>
</g>
</svg>
</body></html>
